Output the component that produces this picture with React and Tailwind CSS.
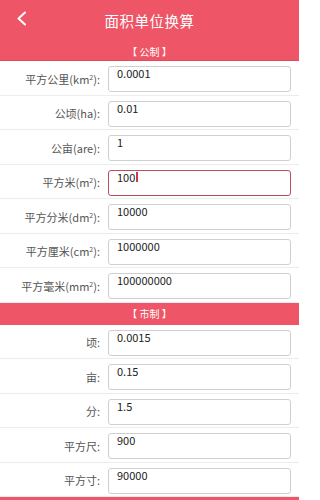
import React from "react";

const metric = [
  { label: "平方公里(km", sup: "2", value: "0.0001" },
  { label: "公顷(ha)", value: "0.01" },
  { label: "公亩(are)", value: "1" },
  { label: "平方米(m", sup: "2", value: "100", focus: true },
  { label: "平方分米(dm", sup: "2", value: "10000" },
  { label: "平方厘米(cm", sup: "2", value: "1000000" },
  { label: "平方毫米(mm", sup: "2", value: "100000000" },
];

const market = [
  { label: "顷", value: "0.0015" },
  { label: "亩", value: "0.15" },
  { label: "分", value: "1.5" },
  { label: "平方尺", value: "900" },
  { label: "平方寸", value: "90000" },
];

function Row({ item }) {
  return (
    <div className="h-[34.5px] flex items-start pt-[5px] border-b border-[#ececec]">
      <div className="w-[101px] h-[26px] flex items-center justify-end pr-[1px] text-[11px] text-[#555]">
        <span>
          {item.label}
          {item.sup ? (
            <>
              <span className="text-[7px] align-[4px]">{item.sup}</span>)
            </>
          ) : null}
          :
        </span>
      </div>
      <div
        className={
          "ml-[7px] w-[183px] h-[26px] rounded-[3px] bg-white pl-[8px] text-[11px] text-[#222] leading-[12px] flex items-start " +
          (item.focus ? "border-[1.5px] border-[#b6505a]" : "border border-[#cfcfcf]")
        }
      >
        <span>{item.value}</span>
        {item.focus ? <span className="ml-[1px] mt-[1px] w-[1.5px] h-[10px] bg-[#d0384a]" /> : null}
      </div>
    </div>
  );
}

export default function App() {
  return (
    <div
      className="w-[299px] h-[500px] overflow-hidden bg-white"
      style={{ fontFamily: '"Noto Sans CJK SC", "Noto Sans", sans-serif' }}
    >
      <div className="bg-[#ee5566]">
        <div className="h-[42px] relative flex items-center justify-center">
          <svg
            className="absolute left-[16px] top-[11px]"
            width="11"
            height="15"
            viewBox="0 0 11 15"
            fill="none"
          >
            <path d="M9 1.5 L2.5 7.5 L9 13.5" stroke="white" strokeWidth="2" strokeLinecap="round" strokeLinejoin="round" />
          </svg>
          <span className="text-white text-[14.5px] tracking-[0.5px]">面积单位换算</span>
        </div>
        <div className="h-[19px] flex items-center justify-center text-white text-[10px] border-b border-[#e04c5c]">
          【 公制 】
        </div>
      </div>
      {metric.map((m, i) => (
        <Row key={i} item={m} />
      ))}
      <div className="h-[22px] bg-[#ee5566] flex items-center justify-center text-white text-[10px]">
        【 市制 】
      </div>
      {market.map((m, i) => (
        <Row key={i} item={m} />
      ))}
      <div className="h-[10px] bg-[#ee5566]" />
    </div>
  );
}
